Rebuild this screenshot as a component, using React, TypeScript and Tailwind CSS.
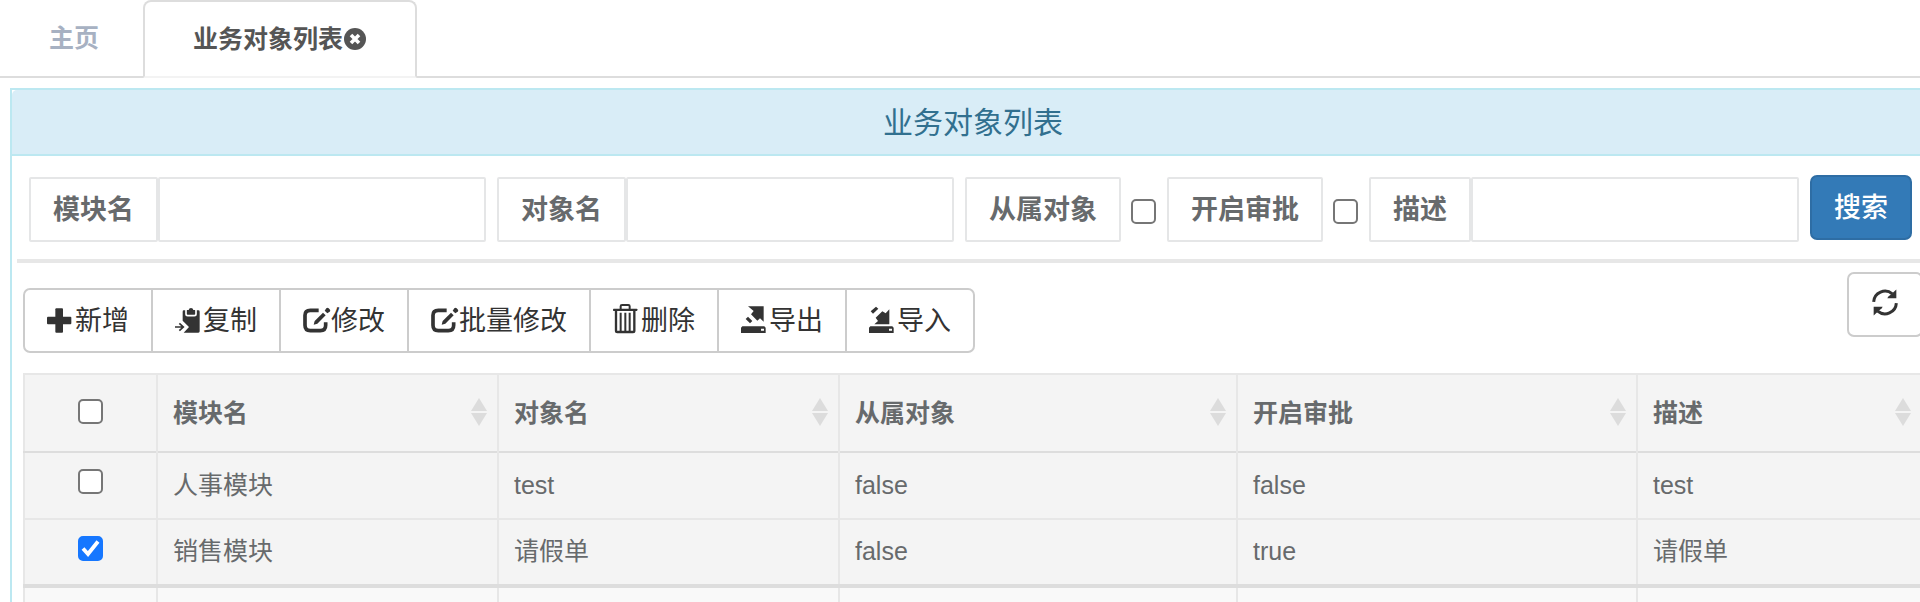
import React, { useState } from "react";

interface Fila {
  id: number;
  modulo: string;
  objeto: string;
  subordinado: string;
  aprobacion: string;
  descripcion: string;
}

const filas: Fila[] = [
  { id: 1, modulo: "人事模块", objeto: "test", subordinado: "false", aprobacion: "false", descripcion: "test" },
  { id: 2, modulo: "销售模块", objeto: "请假单", subordinado: "false", aprobacion: "true", descripcion: "请假单" },
];

const columnas = ["模块名", "对象名", "从属对象", "开启审批", "描述"];

const Icon: React.FC<{ children: React.ReactNode }> = ({ children }) => (
  <svg viewBox="0 0 75 75" className="mr-[3px] size-[25px] shrink-0 overflow-visible" fill="currentColor" aria-hidden="true">
    {children}
  </svg>
);

const PlusIcon = () => (
  <Icon>
    <rect x="0" y="26" width="73" height="23" rx="3" />
    <rect x="25" y="1" width="23" height="73" rx="3" />
  </Icon>
);

const CopyIcon = () => (
  <Icon>
    <path d="M26 7H70Q74 7 74 11V70Q74 74 70 74H26L42 57L23 38V11Q23 7 26 7Z" />
    <path d="M33 5V18Q33 23 38 23H58Q63 23 63 18V5" fill="none" stroke="#fff" strokeWidth="5" />
    <path d="M36 6H41Q42 0 48 0T55 6H60V17H36Z" />
    <path d="M0 57H22M13 46L25 57L13 68" fill="none" stroke="currentColor" strokeWidth="5" />
  </Icon>
);

const EditIcon = () => (
  <Icon>
    <path d="M47 7H22Q6 7 6 22V52Q6 68 22 68H52Q68 68 68 52V43" fill="none" stroke="currentColor" strokeWidth="11" />
    <path d="M32 50L35 39L60 14L68 22L43 47Z" />
    <path d="M65 8L70 1Q73 -2 77 1L81 5Q83 8 80 11L73 16Z" />
  </Icon>
);

const TrashIcon = () => (
  <Icon>
    <path d="M23 4V-5Q23 -9 27 -9H46Q50 -9 50 -5V4" fill="none" stroke="currentColor" strokeWidth="6" />
    <rect x="0" y="2" width="73" height="7" rx="2" />
    <path d="M9 9V68Q9 72 13 72H60Q64 72 64 68V9" fill="none" stroke="currentColor" strokeWidth="7" />
    <path d="M23 14V70M37 14V70M50 14V70" fill="none" stroke="currentColor" strokeWidth="6" />
  </Icon>
);

const ExportIcon = () => (
  <Icon>
    <path d="M21 -5H68V41L57 31L49 38L30 19L38 9Z" />
    <path d="M14 33L21 26L34 39L27 46Z" />
    <path fillRule="evenodd" d="M4 55H70L74 59V75H0V59ZM60 62V68H69V62Z" />
  </Icon>
);

const ImportIcon = () => (
  <Icon>
    <path d="M61 4V49H16L27 39L20 29L40 10L50 16Z" />
    <path d="M5 10L21 -4L28 2L12 17Z" />
    <path fillRule="evenodd" d="M4 55H70L74 59V75H0V59ZM60 62V68H69V62Z" />
  </Icon>
);

const RefreshIcon = () => (
  <svg viewBox="0 0 78 80" className="h-[27px] w-[26px]" fill="currentColor" aria-hidden="true">
    <path d="M5 38A34 34 0 0 1 61 14" fill="none" stroke="currentColor" strokeWidth="9" />
    <path d="M73 1V27H46Q47 22 56 17Z" />
    <path d="M73 42A34 34 0 0 1 17 66" fill="none" stroke="currentColor" strokeWidth="9" />
    <path d="M5 79V53H32Q31 58 22 63Z" />
  </svg>
);

const SortIcon = () => (
  <svg viewBox="0 0 16 28" className="mb-0.5 h-7 w-4 text-[#dcdcdc]" fill="currentColor" aria-hidden="true">
    <path d="M8 0L16 13H0ZM0 15H16L8 28Z" />
  </svg>
);

interface CheckboxProps {
  id?: string;
  label?: string;
  checked?: boolean;
  onChange?: () => void;
}

const Checkbox: React.FC<CheckboxProps> = ({ id, label, checked, onChange }) => (
  <span className="mx-auto grid size-[25px]">
    <input
      id={id}
      type="checkbox"
      aria-label={label}
      checked={checked}
      onChange={onChange}
      className="peer col-start-1 row-start-1 size-[25px] appearance-none rounded-[5px] border-2 border-[#767676] bg-white checked:border-[#1677ff] checked:bg-[#1677ff]"
    />
    <svg
      viewBox="0 0 25 25"
      className="pointer-events-none invisible col-start-1 row-start-1 size-[25px] peer-checked:visible"
      fill="none"
      stroke="#fff"
      strokeWidth="3.8"
      aria-hidden="true"
    >
      <path d="M5 12.5L10 18L20 5.5" />
    </svg>
  </span>
);

const acciones = [
  { texto: "新增", icono: <PlusIcon /> },
  { texto: "复制", icono: <CopyIcon /> },
  { texto: "修改", icono: <EditIcon /> },
  { texto: "批量修改", icono: <EditIcon /> },
  { texto: "删除", icono: <TrashIcon /> },
  { texto: "导出", icono: <ExportIcon /> },
  { texto: "导入", icono: <ImportIcon /> },
];

const etiqueta =
  "flex h-[65px] shrink-0 items-center rounded-[2px] border-2 border-[#e5e6e7] px-[22px] text-[27px] font-bold";
const campo = "h-[65px] w-[328px] rounded-[2px] border-2 border-[#e5e6e7] bg-white px-5 text-[25px] outline-none";

const Columnas: React.FC = () => (
  <colgroup>
    <col className="w-[133px]" />
    <col className="w-[341px]" />
    <col className="w-[341px]" />
    <col className="w-[398px]" />
    <col className="w-[400px]" />
    <col />
  </colgroup>
);

const App: React.FC = () => {
  const [seleccion, setSeleccion] = useState<number[]>([2]);
  const [subordinado, setSubordinado] = useState(false);
  const [aprobacion, setAprobacion] = useState(false);

  const alternar = (id: number) =>
    setSeleccion((prev) => (prev.includes(id) ? prev.filter((x) => x !== id) : [...prev, id]));

  const todas = seleccion.length === filas.length;

  return (
    <div className="h-screen overflow-hidden bg-white font-['Liberation_Sans','Noto_Sans_CJK_SC',sans-serif] text-[25px] leading-9 text-[#676a6c]">
      {/* Pestañas */}
      <nav className="flex h-[78px] border-b-2 border-[#dddddd] text-[25px] font-bold">
        <a href="#inicio" className="flex items-center pr-11 pl-[49px] text-[#a7b1c2]">
          主页
        </a>
        <div className="-mb-0.5 flex items-center rounded-t-[8px] border-2 border-b-[#f3f3f3] border-[#dddddd] bg-white px-12 text-[#555555]">
          <a href="#objetos">业务对象列表</a>
          <button type="button" aria-label="关闭">
            <svg viewBox="0 0 24 24" className="size-6" aria-hidden="true">
              <circle cx="12" cy="12" r="11" fill="currentColor" />
              <path d="M8 8L16 16M16 8L8 16" stroke="#fff" strokeWidth="3.6" />
            </svg>
          </button>
        </div>
      </nav>

      {/* Panel principal */}
      <section className="-mr-4 mt-2.5 ml-2.5 border-2 border-[#bce8f1]">
        <h1 className="flex h-[66px] items-center justify-center rounded-tl-[5px] border-b-2 border-[#bce8f1] bg-[#d9edf7] pt-0.5 text-[30px] text-[#31708f]">
          业务对象列表
        </h1>

        {/* Formulario de búsqueda */}
        <form className="flex items-center gap-[11px] pt-[21px] pl-[17px]" onSubmit={(e) => e.preventDefault()}>
          <div className="flex">
            <label htmlFor="modulo" className={etiqueta}>模块名</label>
            <input id="modulo" type="text" className={campo} />
          </div>
          <div className="flex">
            <label htmlFor="objeto" className={etiqueta}>对象名</label>
            <input id="objeto" type="text" className={campo} />
          </div>
          <div className="flex items-center gap-2.5">
            <label htmlFor="subordinado" className={etiqueta}>从属对象</label>
            <div className="pt-[3px]">
              <Checkbox id="subordinado" checked={subordinado} onChange={() => setSubordinado(!subordinado)} />
            </div>
          </div>
          <div className="flex items-center gap-2.5">
            <label htmlFor="aprobacion" className={etiqueta}>开启审批</label>
            <div className="pt-[3px]">
              <Checkbox id="aprobacion" checked={aprobacion} onChange={() => setAprobacion(!aprobacion)} />
            </div>
          </div>
          <div className="flex">
            <label htmlFor="descripcion" className={etiqueta}>描述</label>
            <input id="descripcion" type="text" className={campo} />
          </div>
          <button
            type="submit"
            className="-mt-1 h-[65px] shrink-0 rounded-[7px] border-2 border-[#2e6da4] bg-[#337ab7] px-[22px] text-[27px] font-medium text-white"
          >
            搜索
          </button>
        </form>

        <hr className="mx-[5px] mt-[17px] border-t-4 border-[#e7e7e7]" />

        <div className="px-[11px]">
          {/* Barra de acciones */}
          <div className="flex items-start justify-between pt-[9px] text-[27px] text-[#333333]">
            <div className="mt-4 flex">
              {acciones.map((a) => (
                <button
                  key={a.texto}
                  type="button"
                  className="-ml-0.5 flex h-[65px] items-center border-2 border-[#cccccc] bg-white px-[22px] first:ml-0 first:rounded-l-[7px] last:rounded-r-[7px]"
                >
                  {a.icono}
                  {a.texto}
                </button>
              ))}
            </div>
            <button
              type="button"
              aria-label="刷新"
              className="flex h-[65px] items-center rounded-[7px] border-2 border-[#cccccc] bg-white px-[23px] pb-1"
            >
              <RefreshIcon />
            </button>
          </div>

          {/* Tabla de objetos */}
          <table className="mt-5 w-full table-fixed border-collapse border-2 border-[#e7e7e7] bg-[#f4f4f4] text-left">
            <Columnas />
            <thead>
              <tr className="h-[78px] border-b-2 border-[#dddddd]">
                <th className="border-r-2 border-[#e7e7e7] pb-1">
                  <Checkbox label="全选" checked={todas} onChange={() => setSeleccion(todas ? [] : filas.map((f) => f.id))} />
                </th>
                {columnas.map((c) => (
                  <th key={c} className="border-r-2 border-[#e7e7e7] pr-2.5 pl-[15px] font-bold">
                    <button type="button" className="flex w-full items-center justify-between">
                      {c}
                      <SortIcon />
                    </button>
                  </th>
                ))}
              </tr>
            </thead>
            <tbody>
              {filas.map((f) => (
                <tr key={f.id} className="h-[67px] border-b-2 border-[#e7e7e7]">
                  <td className="border-r-2 border-[#e7e7e7] pb-2">
                    <Checkbox label={f.modulo} checked={seleccion.includes(f.id)} onChange={() => alternar(f.id)} />
                  </td>
                  <td className="border-r-2 border-[#e7e7e7] pb-0.5 pl-[15px]">{f.modulo}</td>
                  <td className="border-r-2 border-[#e7e7e7] pb-0.5 pl-[15px]">{f.objeto}</td>
                  <td className="border-r-2 border-[#e7e7e7] pb-0.5 pl-[15px]">{f.subordinado}</td>
                  <td className="border-r-2 border-[#e7e7e7] pb-0.5 pl-[15px]">{f.aprobacion}</td>
                  <td className="border-r-2 border-[#e7e7e7] pb-0.5 pl-[15px]">{f.descripcion}</td>
                </tr>
              ))}
            </tbody>
            <tfoot>
              <tr className="h-[67px] border-t-4 border-[#dddddd] bg-[#f9f9f9]">
                <td className="border-r-2 border-[#e7e7e7]" />
                {columnas.map((c) => (
                  <td key={c} className="border-r-2 border-[#e7e7e7]" />
                ))}
              </tr>
            </tfoot>
          </table>
        </div>
      </section>
    </div>
  );
};

export default App;
